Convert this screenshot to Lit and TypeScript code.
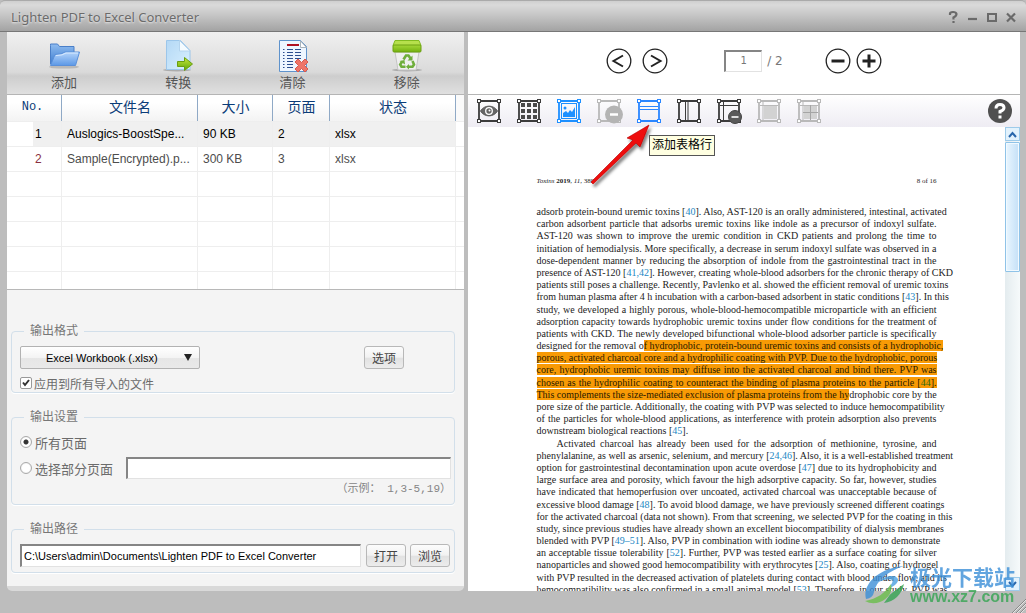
import { LitElement, html, svg, css, nothing } from "lit";
import { customElement, state } from "lit/decorators.js";
import { classMap } from "lit/directives/class-map.js";

interface Line {
  text: string;
  hl?: "all" | "tail" | "head";
  kind?: "indent" | "last";
}

// A "|" in a line's text marks where the highlight starts or ends.
const LINES: Line[] = [
  { text: "adsorb protein-bound uremic toxins [40]. Also, AST-120 is an orally administered, intestinal, activated" },
  { text: "carbon adsorbent particle that adsorbs uremic toxins like indole as a precursor of indoxyl sulfate." },
  { text: "AST-120 was shown to improve the uremic condition in CKD patients and prolong the time to" },
  { text: "initiation of hemodialysis. More specifically, a decrease in serum indoxyl sulfate was observed in a" },
  { text: "dose-dependent manner by reducing the absorption of indole from the gastrointestinal tract in the" },
  { text: "presence of AST-120 [41,42]. However, creating whole-blood adsorbers for the chronic therapy of CKD" },
  { text: "patients still poses a challenge. Recently, Pavlenko et al. showed the efficient removal of uremic toxins" },
  { text: "from human plasma after 4 h incubation with a carbon-based adsorbent in static conditions [43]. In this" },
  { text: "study, we developed a highly porous, whole-blood-hemocompatible microparticle with an efficient" },
  { text: "adsorption capacity towards hydrophobic uremic toxins under flow conditions for the treatment of" },
  { text: "patients with CKD. The newly developed bifunctional whole-blood adsorber particle is specifically" },
  { text: "designed for the removal o|f hydrophobic, protein-bound uremic toxins and consists of a hydrophobic,", hl: "tail" },
  { text: "porous, activated charcoal core and a hydrophilic coating with PVP. Due to the hydrophobic, porous", hl: "all" },
  { text: "core, hydrophobic uremic toxins may diffuse into the activated charcoal and bind there. PVP was", hl: "all" },
  { text: "chosen as the hydrophilic coating to counteract the binding of plasma proteins to the particle [44].", hl: "all" },
  { text: "This complements the size-mediated exclusion of plasma proteins from the hy|drophobic core by the", hl: "head" },
  { text: "pore size of the particle. Additionally, the coating with PVP was selected to induce hemocompatibility" },
  { text: "of the particles for whole-blood applications, as interference with protein adsorption also prevents" },
  { text: "downstream biological reactions [45].", kind: "last" },
  { text: "Activated charcoal has already been used for the adsorption of methionine, tyrosine, and", kind: "indent" },
  { text: "phenylalanine, as well as arsenic, selenium, and mercury [24,46]. Also, it is a well-established treatment" },
  { text: "option for gastrointestinal decontamination upon acute overdose [47] due to its hydrophobicity and" },
  { text: "large surface area and porosity, which favour the high adsorptive capacity. So far, however, studies" },
  { text: "have indicated that hemoperfusion over uncoated, activated charcoal was unacceptable because of" },
  { text: "excessive blood damage [48]. To avoid blood damage, we have previously screened different coatings" },
  { text: "for the activated charcoal (data not shown). From that screening, we selected PVP for the coating in this" },
  { text: "study, since previous studies have already shown an excellent biocompatibility of dialysis membranes" },
  { text: "blended with PVP [49–51]. Also, PVP in combination with iodine was already shown to demonstrate" },
  { text: "an acceptable tissue tolerability [52]. Further, PVP was tested earlier as a surface coating for silver" },
  { text: "nanoparticles and showed good hemocompatibility with erythrocytes [25]. Also, coating of hydrogel" },
  { text: "with PVP resulted in the decreased activation of platelets during contact with blood under flow, and its" },
  { text: "hemocompatibility was also confirmed in a small animal model [53]. Therefore, in our study, PVP was" },
];

const FILES = [
  { no: "1", name: "Auslogics-BoostSpe...", size: "90 KB", pages: "2", status: "xlsx" },
  { no: "2", name: "Sample(Encrypted).p...", size: "300 KB", pages: "3", status: "xlsx" },
];

const folderIcon = html`<svg class="big" viewBox="0 0 32 32" aria-hidden="true">
  <defs><linearGradient id="fa" x1="0" y1="0" x2="0" y2="1"><stop offset="0" stop-color="#8fbcf0"/><stop offset="1" stop-color="#3f7ed0"/></linearGradient>
  <linearGradient id="fb" x1="0" y1="0" x2="0" y2="1"><stop offset="0" stop-color="#b5d5fb"/><stop offset="1" stop-color="#5c98e6"/></linearGradient></defs>
  <ellipse cx="16" cy="27" rx="15" ry="1.6" fill="#aaa" opacity=".7"/>
  <path d="M2.500 5.500V4h7l2 2.500h14.500v17.500H2.500z" fill="url(#fa)" stroke="#4a7fc8"/>
  <path d="M7 14.500q7 0 10-2.500h14.500l-4 13.500H2.500z" fill="url(#fb)" stroke="#5a90da"/>
  <path d="M8 15.500q7 0 10-2.500h12" fill="none" stroke="#d8eaff"/></svg>`;

const convertIcon = html`<svg class="big" viewBox="0 0 32 32" aria-hidden="true">
  <defs><linearGradient id="ca" x1="0" y1="0" x2="1" y2="1"><stop offset="0" stop-color="#b4d8f5"/><stop offset="1" stop-color="#d8f0ff"/></linearGradient>
  <linearGradient id="cb" x1="0" y1="0" x2="0" y2="1"><stop offset="0" stop-color="#c8e83a"/><stop offset="1" stop-color="#5ca60a"/></linearGradient></defs>
  <ellipse cx="15" cy="30" rx="14" ry="1.500" fill="#999" opacity=".7"/>
  <path d="M4.500 .5h14l9.500 10v19h-23.500z" fill="url(#ca)" stroke="#9cc6ea"/>
  <path d="M17.500 .5v10.500h10.500z" fill="#f4fbff" stroke="#b4d4ee"/>
  <path d="M15.500 21.500h7v-4l8 6.500-8 6.500v-4h-7z" fill="url(#cb)" stroke="#6a9e10"/></svg>`;

const clearIcon = html`<svg class="big" viewBox="0 0 32 32" aria-hidden="true">
  <path d="M2.500 .5h21l6 6v25h-27z" fill="#eef6ff" stroke="#5f93cc"/>
  <path d="M23.500 1v6.500h6z" fill="#fff" stroke="#aab4bb"/>
  <path d="M10 5h12" stroke="#b01020" stroke-width="2"/>
  <g stroke="#2d4f8f" stroke-width="1"><path d="M10 9.500h6M18 9.500h6M10 12.500h6M18 12.500h6M10 15.500h6M18 15.500h6M10 18.500h6M18 18.500h6M10 21.500h6M10 24.500h6M10 27.500h6"/>
  <path d="M6 9.500h1.500M6 12.500h1.500M6 15.500h1.500M6 18.500h1.500M6 21.500h1.500M6 24.500h1.500M6 27.500h1.500"/></g>
  <path d="M18 22l3-3 3.500 3.500L28 19l3 3-3.500 3.500L31 29l-3 3-3.500-3.500L21 32l-3-3 3.500-3.500z" fill="#ee7468" stroke="#d8584c"/></svg>`;

const binIcon = html`<svg class="big" viewBox="0 0 32 32" aria-hidden="true">
  <defs><linearGradient id="ba" x1="0" y1="0" x2="0" y2="1"><stop offset="0" stop-color="#a6d838"/><stop offset="1" stop-color="#72b010"/></linearGradient></defs>
  <ellipse cx="16" cy="30" rx="15" ry="1.500" fill="#999" opacity=".7"/>
  <path d="M4 12h24l-3 18H7z" fill="#efefef" stroke="#c4c4c4"/>
  <path d="M4 .5h24l2 5H2z" fill="#b6e04c" stroke="#82bb20"/>
  <rect x="2" y="5" width="28" height="7" rx="1" fill="url(#ba)" stroke="#6ca012"/>
  <g fill="none" stroke="#6fae3c" stroke-width="2.600"><path d="M12.500 19.500l2.500-4h2.500l2 3"/><path d="M21.500 21l1.500 3.500-1.500 2.200h-4"/><path d="M14.500 26.700h-4L9.200 24.500l2-3"/></g>
  <path d="M21.500 15.500v5h-5zM18 24v5.400l-3-2.700zM8.500 21l5-1 .5 4.500z" fill="#6fae3c"/></svg>`;

const frame = (c: string, inner: unknown, over: unknown = nothing) => html`<svg viewBox="0 0 24 24" aria-hidden="true">
  <g fill="none" stroke=${c}><path d="M4 2h16M4 22h16M2 4v16M22 4v16" stroke-width="1.800"/>
  ${inner}
  <g fill="#fff"><rect x=".5" y=".5" width="3" height="3"/><rect x="20.500" y=".5" width="3" height="3"/><rect x=".5" y="20.500" width="3" height="3"/><rect x="20.500" y="20.500" width="3" height="3"/></g>${over}</g></svg>`;

const DARK = "#3c3c3c";
const BLUE = "#1e90ff";
const PALE = "#b9b9b9";

const TOOLS = [
  { label: "预览", icon: frame(DARK, svg`<path d="M3.500 12c4-6.500 13-6.500 17 0-4 6.500-13 6.500-17 0z" fill="#666" stroke="#555"/><circle cx="12" cy="12" r="3.300" fill="#666" stroke="#fff" stroke-width="1.300"/><circle cx="12.500" cy="11.500" r="1" fill="#fff" stroke="none"/>`) },
  { label: "表格", icon: frame(DARK, svg`<path d="M4 6h4M10 6h4M16 6h4M4 12h4M10 12h4M16 12h4M4 18h4M10 18h4M16 18h4" stroke="#4a4a4a" stroke-width="4"/>`) },
  { label: "图片", icon: frame(BLUE, svg`<rect x="4.500" y="4.500" width="15" height="15"/><path d="M6 18v-4l3-2 2 2 2-3 2 2 3-5v10z" fill="#1e90ff" stroke="none"/><circle cx="8" cy="9" r="1.500" fill="#1e90ff" stroke="none"/>`) },
  { label: "删除区域", disabled: true, icon: frame(PALE, nothing, svg`<circle cx="17" cy="15.500" r="9" fill="#b4b4b4" stroke="none"/><path d="M13 15.500h8" stroke="#fff" stroke-width="2.500"/>`) },
  { label: "添加表格行", tip: true, icon: frame("#2a86ff", svg`<path d="M3 7.500h18M3 10.500h18" stroke-width="1.200"/>`) },
  { label: "添加表格列", icon: frame(DARK, svg`<path d="M8.500 3v18M11 3v18"/>`) },
  { label: "删除行列", icon: frame(DARK, svg`<path d="M3 6.500h18M6.500 3v18"/>`, svg`<circle cx="18" cy="18" r="6.500" fill="#5a5a5a" stroke="#444"/><path d="M14.500 18h7" stroke="#fff" stroke-width="1.600"/>`) },
  { label: "合并单元格", disabled: true, icon: frame(PALE, svg`<path d="M3 6.500h18M6 3v18"/><rect x="7" y="7" width="13" height="13" fill="#d2d2d2" stroke="none"/>`) },
  { label: "拆分单元格", disabled: true, icon: frame(PALE, svg`<path d="M3 6.500h18M6 3v18"/><rect x="7" y="7" width="13" height="13" fill="#d2d2d2" stroke="none"/><path d="M13.500 6v15M6 13.500h15" stroke="#a5a5a5"/>`) },
];

@customElement("pdf-page")
export class PdfPage extends LitElement {
  static styles = css`
    :host { display: block; width: 400px; font-family: "Palatino Linotype", Palatino, "Liberation Serif", serif; color: #1c1c1c; }
    .head { display: flex; justify-content: space-between; font-size: 7px; line-height: 10px; padding-bottom: 20px; }
    .body { display: grid; grid-template-columns: minmax(0, 1fr); grid-auto-rows: 1fr; height: 390px; font-size: 10px; line-height: 12px; }
    .line { margin: 0; white-space: nowrap; text-align: justify; text-align-last: justify; }
    .last { text-align-last: left; }
    .indent { padding-left: 20px; }
    .mark { background: #f89a05; color: #2a1a00; }
    a { color: #2287c4; text-decoration: none; }
    .mark a { color: #2f6b14; }
  `;

  private cites(text: string) {
    return text
      .split(/(\[[^\]]+\])/)
      .filter(Boolean)
      .map((p) => (p[0] === "[" ? html`[<a href="#ref">${p.slice(1, -1)}</a>]` : p));
  }

  private content(l: Line) {
    const [a, b = ""] = l.text.split("|");
    if (l.hl === "all") return html`<span class="mark">${this.cites(a)}</span>`;
    if (l.hl === "tail") return html`${a}<span class="mark">${b}</span>`;
    if (l.hl === "head") return html`<span class="mark">${a}</span>${b}`;
    return this.cites(a);
  }

  render() {
    return html`
      <div class="head"><span><i>Toxins</i> <b>2019</b>, <i>11</i>, 389</span><span>8 of 16</span></div>
      <div class="body">
        ${LINES.map((l) => html`<p class=${classMap({ line: true, last: l.kind === "last", indent: l.kind === "indent" })}>${this.content(l)}</p>`)}
      </div>`;
  }
}

@customElement("app-root")
export class AppRoot extends LitElement {
  @state() private range = "all";

  static styles = css`
    :host { display: flex; flex-direction: column; height: 100vh; position: relative; overflow: hidden; background: #bdbdbd;
      font-family: "Liberation Sans", "Noto Sans CJK SC", sans-serif; font-size: 12px; color: #6b6b6b; }
    * { box-sizing: border-box; }
    button, input, select { font: inherit; color: inherit; margin: 0; }
    button { padding: 0; border: 0; background: none; }
    svg { display: block; }

    .titlebar { flex: none; height: 32px; display: flex; align-items: center; justify-content: space-between; padding: 2px 10px 0 11px;
      background: linear-gradient(#cfcfcf, #dadada 4px, #c6c6c6 14px, #a3a3a3); border-bottom: 1px solid #777; border-top: 1px solid #aaa; border-radius: 5px 5px 0 0; }
    h1 { margin: 0; font: 400 13px/18px "Noto Sans", sans-serif; color: #6b6b6b; text-shadow: 0 1px 2px #eee; }
    .wins { display: flex; gap: 8px; }
    .wins svg { width: 11px; height: 14px; }

    .work { flex: 1; min-height: 0; display: grid; grid-template-columns: minmax(0, 457fr) minmax(0, 552fr); gap: 4px; padding: 0 6px 22px 7px; }
    .left { display: flex; flex-direction: column; min-height: 0; background: #f4f4f4; border-bottom: 5px solid #d9d9d9; border-radius: 0 0 5px 5px; }
    .actions { flex: none; display: grid; grid-template-columns: repeat(4, 1fr); height: 63px; border-bottom: 1px solid #b5b5b5;
      background: linear-gradient(#f0f0f0, #dadada 40px, #cdcdcd 44px, #e0e0e0); }
    .actions button { display: flex; flex-direction: column; align-items: center; padding-top: 7px; font-size: 13px; line-height: 18px; color: #555; gap: 1px; }
    .big { width: 32px; height: 34px; overflow: visible; }

    .list { flex: none; height: 195px; overflow: hidden; background: #fff; border-bottom: 1px solid #b8b8b8; }
    table { width: 100%; table-layout: fixed; border-collapse: separate; border-spacing: 0; font-size: 12px; }
    th { height: 27px; padding: 0 0 2px; font: 400 14px/20px "Liberation Sans", "Noto Sans CJK SC", sans-serif; color: #0b3c78; border-bottom: 1px solid #eee;
      background: linear-gradient(90deg, transparent calc(100% - 1px), #8fa9c6 0), linear-gradient(#fff 30%, #f3f3f3); }
    th.mono { padding-right: 4px; font-family: "Liberation Mono", monospace; font-size: 12px; }
    th.end { background: #fafafa; }
    td { height: 25px; padding: 0 0 0 5px; color: #4d4d4d; border-right: 1px solid #eee; border-bottom: 1px solid #eee; white-space: nowrap; }
    td:first-child { padding-left: 28px; color: #8a3040; }
    td:last-child { border-right: 0; }
    .sel td { background: #f0f0f0; color: #000; }
    .sel td:first-child { color: #000; background: linear-gradient(90deg, #fff 26px, #f0f0f0 0); }
    .sel td:last-child { background: #fff; }
    .c1 { width: 55px; } .c2 { width: 136px; } .c3 { width: 75px; } .c4 { width: 57px; } .c6 { width: 8px; }

    form { display: flex; flex-direction: column; gap: 16px; padding: 33px 9px 0 4px; }
    fieldset { margin: 0; min-width: 0; padding: 0 3px 0 8px; border: 1px solid #d2dfea; border-radius: 4px; box-shadow: 0 1px #fff; }
    legend { margin-left: 4px; padding: 0 6px; line-height: 16px; font-size: 12px; color: #777; }
    .row { display: flex; align-items: center; }
    .format { justify-content: space-between; padding: 7px 47px 5px 0; }
    .combo { position: relative; width: 180px; }
    .combo svg { position: absolute; right: 7px; top: 8px; width: 10px; height: 7px; pointer-events: none; }
    select { appearance: none; width: 100%; height: 23px; padding: 0 25px; font-size: 11px; color: #000; border: 1px solid #b2b2b2; border-radius: 2px; background: linear-gradient(#fff, #f4f4f4 50%, #e6e6e6 55%, #e9e9e9); }
    .push { flex: none; width: 40px; height: 23px; font-size: 12px; color: #444; border: 1px solid #b8b8b8; border-radius: 3px; background: linear-gradient(#fcfcfc, #f2f2f2 48%, #e2e2e2 54%, #ececec); }
    .tick { height: 18px; gap: 2px; }
    .box, .dot { appearance: none; flex: none; width: 12px; height: 12px; border: 1px solid #999; background: #fff; }
    .box { border-radius: 2px; }
    .box:checked { background: #fff url('data:image/svg+xml,<svg xmlns="http://www.w3.org/2000/svg" viewBox="0 0 10 10"><path d="M2 4.500l2 2.500 4-5" fill="none" stroke="%23333" stroke-width="2"/></svg>'); }
    .dot { border-radius: 50%; border-color: #aaa; background: radial-gradient(#fff 50%, #ddd); }
    .dot:checked { background: radial-gradient(#333 0 2px, #fff 3px 4px, #ddd); }
    .opt { height: 26px; gap: 3px; font-size: 13px; }
    .opt.first { margin-top: 4px; }
    .opt label { white-space: nowrap; }
    .field { min-width: 0; flex: 1; height: 22px; padding: 0 3px; background: #fff; border: 2px solid; border-color: #858585 #e2e2e2 #e2e2e2 #858585; border-right-width: 1px; border-bottom-width: 1px; outline: 0; }
    .opt .field { margin-left: 10px; }
    .hint { margin: 0; padding: 0 0 7px; text-align: right; font: 11px/16px "Liberation Mono", "Noto Sans CJK SC", monospace; color: #858585; }
    .path { padding: 7px 1px 5px 0; gap: 4px; }
    .path .field { height: 23px; font-size: 11px; color: #000; padding: 0 2px; margin-right: 1px; }

    .right { display: flex; flex-direction: column; min-height: 0; background: #fff; }
    .nav { flex: none; height: 63px; display: flex; align-items: center; justify-content: center; padding-bottom: 4px; border-bottom: 1px solid #b5b5b5; }
    .nav svg { width: 26px; height: 26px; }
    .pair { display: flex; gap: 10px; }
    .pair.near { gap: 5px; }
    .pageno { display: flex; align-items: center; gap: 5px; margin: 0 42px 0 56px; font: 12px/22px "DejaVu Sans", sans-serif; color: #777; }
    .pageno input { width: 38px; height: 22px; padding: 0 0 2px; text-align: center; font: 10px "DejaVu Sans", sans-serif; border: 2px solid; border-color: #858585 #e2e2e2 #e2e2e2 #858585; border-right-width: 1px; border-bottom-width: 1px; }
    .tools { flex: none; height: 32px; display: flex; align-items: center; gap: 16px; padding: 0 8px 0 9px; background: linear-gradient(#fff, #eeecf3); }
    .tools svg { width: 24px; height: 24px; overflow: visible; }
    .slot { position: relative; }
    .slot button { display: block; }
    .help { margin-left: auto; }
    .tip { position: absolute; z-index: 3; left: 12px; top: 36px; padding: 0 2px; border: 1px solid #555; background: #ffffe1; color: #000; font-size: 12px; line-height: 19px; white-space: nowrap; }
    .tools .pointer { position: absolute; z-index: 2; left: -50px; top: 24px; width: 70px; height: 66px; pointer-events: none; }

    .doc { flex: 1; min-height: 0; display: grid; grid-template-columns: minmax(0, 1fr) 15px; }
    .sheet { overflow: hidden; display: flex; justify-content: center; align-items: flex-start; padding-top: 49px; }
    .scroll { display: flex; flex-direction: column; gap: 1px; background: linear-gradient(90deg, #e4ecef, #f6fafb); }
    .scroll button { flex: none; height: 14px; display: grid; place-items: center; border: 1px solid #9ecbea; background: #e2f2fd; }
    .scroll svg { width: 9px; height: 7px; }
    .thumb { flex: none; height: 28%; border: 1px solid #8fc3e8; border-radius: 1px; background: linear-gradient(90deg, #e9f6ff, #c4e0f7); box-shadow: inset 0 0 0 1px #f2faff; }
    .track { flex: 1; }

    .stamp { position: absolute; right: 11px; bottom: 7px; display: flex; align-items: center; gap: 2px; opacity: .8; pointer-events: none; }
    .stamp svg { width: 44px; height: 40px; }
    .cn { font: 700 21px/24px "Noto Sans CJK SC", sans-serif; color: #3b8fd8; }
    .url { font: 700 16px/18px "Liberation Sans", sans-serif; color: #35a552; }
    .grip { position: absolute; right: 0; bottom: 0; width: 16px; height: 16px; }
  `;

  private circle(label: string, d: string, w = 2) {
    return html`<button aria-label=${label}><svg viewBox="0 0 26 26"><circle cx="13" cy="13" r="11.800" fill="none" stroke="#222" stroke-width="1.300"/><path d=${d} fill="none" stroke="#222" stroke-width=${w}/></svg></button>`;
  }

  render() {
    return html`
      <header class="titlebar">
        <h1>Lighten PDF to Excel Converter</h1>
        <div class="wins">
          <button aria-label="帮助"><svg viewBox="0 0 11 14"><path d="M2 5V3.500Q2 2 5 2t3.500 2q0 2-3 3.500V9.500M5.500 11v2" fill="none" stroke="#6a6a6a" stroke-width="2.200"/></svg></button>
          <button aria-label="最小化"><svg viewBox="0 0 11 14"><path d="M1 9h9" stroke="#6a6a6a" stroke-width="2.200"/></svg></button>
          <button aria-label="最大化"><svg viewBox="0 0 11 14"><rect x="2" y="4" width="8" height="7" fill="none" stroke="#6a6a6a" stroke-width="2"/></svg></button>
          <button aria-label="关闭"><svg viewBox="0 0 11 14"><path d="M2 3.500l8 8M10 3.500l-8 8" stroke="#6a6a6a" stroke-width="2.200"/></svg></button>
        </div>
      </header>
      <main class="work">
        <section class="left">
          <nav class="actions">
            <button>${folderIcon}添加</button>
            <button>${convertIcon}转换</button>
            <button>${clearIcon}清除</button>
            <button>${binIcon}移除</button>
          </nav>
          <div class="list">
            <table>
              <colgroup><col class="c1" /><col class="c2" /><col class="c3" /><col class="c4" /><col /><col class="c6" /></colgroup>
              <thead><tr><th class="mono">No.</th><th>文件名</th><th>大小</th><th>页面</th><th>状态</th><th class="end"></th></tr></thead>
              <tbody>
                ${FILES.map((f, i) => html`<tr class=${classMap({ sel: i === 0 })}><td>${f.no}</td><td>${f.name}</td><td>${f.size}</td><td>${f.pages}</td><td>${f.status}</td><td></td></tr>`)}
                ${[0, 1, 2, 3, 4].map(() => html`<tr><td></td><td></td><td></td><td></td><td></td><td></td></tr>`)}
              </tbody>
            </table>
          </div>
          <form @submit=${(e: Event) => e.preventDefault()}>
            <fieldset>
              <legend>输出格式</legend>
              <div class="row format">
                <div class="combo">
                  <select aria-label="输出格式"><option>Excel Workbook (.xlsx)</option></select>
                  <svg viewBox="0 0 10 7"><path d="M1 0h8L5 7z" fill="#222"/></svg>
                </div>
                <button type="button" class="push">选项</button>
              </div>
              <div class="row tick"><input class="box" type="checkbox" id="applyall" checked /><label for="applyall">应用到所有导入的文件</label></div>
            </fieldset>
            <fieldset>
              <legend>输出设置</legend>
              <div class="row opt first"><input class="dot" type="radio" name="range" id="all" .checked=${this.range === "all"} @change=${() => (this.range = "all")} /><label for="all">所有页面</label></div>
              <div class="row opt"><input class="dot" type="radio" name="range" id="some" .checked=${this.range === "some"} @change=${() => (this.range = "some")} /><label for="some">选择部分页面</label><input class="field" type="text" aria-label="选择部分页面" /></div>
              <p class="hint">（示例： 1,3-5,19）</p>
            </fieldset>
            <fieldset>
              <legend>输出路径</legend>
              <div class="row path">
                <input class="field" type="text" aria-label="输出路径" .value=${"C:\\Users\\admin\\Documents\\Lighten PDF to Excel Converter"} />
                <button type="button" class="push">打开</button>
                <button type="button" class="push">浏览</button>
              </div>
            </fieldset>
          </form>
        </section>
        <section class="right">
          <div class="nav">
            <div class="pair">
              ${this.circle("上一页", "M17 7.500L7.500 13l9.500 5.500")}
              ${this.circle("下一页", "M9 7.500l9.500 5.500L9 18.500")}
            </div>
            <div class="pageno"><input type="text" aria-label="页码" value="1" /><span>/ 2</span></div>
            <div class="pair near">
              ${this.circle("缩小", "M6.500 13h13", 3)}
              ${this.circle("放大", "M6.500 13h13M13 6.500v13", 3)}
            </div>
          </div>
          <div class="tools">
            ${TOOLS.map((t) => html`<div class="slot">
              <button aria-label=${t.label} ?disabled=${!!t.disabled}>${t.icon}</button>
              ${t.tip ? html`<span class="tip" role="tooltip">添加表格行</span>
                <svg class="pointer" viewBox="0 0 70 66"><defs><filter id="sh" x="-20%" y="-20%" width="150%" height="150%"><feDropShadow dx="2" dy="3" stdDeviation="1.500" flood-opacity=".5"/></filter></defs>
                <path d="M62 2L53 24l-4-4L6 61l-2-2 42-42-6-2z" fill="#ee0a0a" stroke="#b50000" stroke-width=".6" filter="url(#sh)"/></svg>` : nothing}
            </div>`)}
            <button class="help" aria-label="帮助"><svg viewBox="0 0 24 24"><circle cx="12" cy="12" r="12" fill="#505050"/><path d="M8 9.500q0-4 4-4t4 3.200q0 2.300-4 3.800v2M12 16.500v3" fill="none" stroke="#fff" stroke-width="3"/></svg></button>
          </div>
          <div class="doc">
            <div class="sheet"><pdf-page></pdf-page></div>
            <div class="scroll">
              <button aria-label="向上滚动"><svg viewBox="0 0 9 7"><path d="M1 6l3.500-4L8 6" fill="none" stroke="#2866ac" stroke-width="2"/></svg></button>
              <div class="thumb"></div>
              <div class="track"></div>
              <button aria-label="向下滚动"><svg viewBox="0 0 9 7"><path d="M1 1l3.500 4L8 1" fill="none" stroke="#2866ac" stroke-width="2"/></svg></button>
            </div>
          </div>
        </section>
      </main>
      <div class="stamp">
        <svg viewBox="0 0 44 40"><path d="M2 34C-2 20 14 3 40 1 24 6 12 16 10 27q-1 6-8 7z" fill="#3b8fd8"/><path d="M12 18c8-8 20-9 22-4 1 4-5 8-12 11 4-4 8-8 6-10-3-2-9 0-16 3z" fill="#4a9fe0"/><path d="M1 36c12-2 20-8 26-17 2 8-3 15-11 18q-8 3-15-1z" fill="#6abf4b"/><path d="M20 38c10-1 18-9 20-19-8 6-13 9-15 12z" fill="#35a552"/></svg>
        <div><div class="cn">极光下载站</div><div class="url">www.xz7.com</div></div>
      </div>
      <svg class="grip" viewBox="0 0 16 16" aria-hidden="true"><path d="M2 16L16 2M6 16L16 6M10 16l6-6" stroke="#888"/><path d="M3 16L16 3M7 16l9-9M11 16l5-5" stroke="#e4e4e4"/></svg>`;
  }
}
